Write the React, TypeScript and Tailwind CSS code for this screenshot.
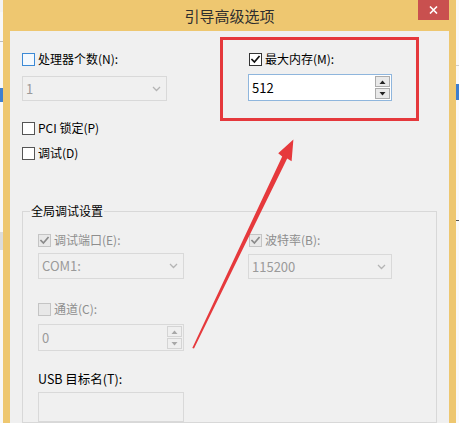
import React from "react";

type CbVariant = "normal" | "hover" | "checked" | "disabledChecked" | "disabled";

function Check({ color }: { color: string }) {
  return (
    <svg width="11" height="11" viewBox="0 0 11 11" className="block">
      <path d="M2 5.6 L4.4 8 L9 2.6" fill="none" stroke={color} strokeWidth="1.7" strokeLinecap="square" />
    </svg>
  );
}

function CheckBox({ variant, label }: { variant: CbVariant; label: string }) {
  const box =
    variant === "hover"
      ? "border-[#3c8ad6] bg-[#f4f9fe]"
      : variant === "checked"
      ? "border-[#333333] bg-white"
      : variant === "normal"
      ? "border-[#555555] bg-white"
      : "border-[#c4c4c4] bg-[#e8e8e8]";
  const text = variant === "disabled" || variant === "disabledChecked" ? "text-[#8e8e8e]" : "text-black";
  return (
    <div className="flex items-center h-[16px] gap-[3px]">
      <div className={`w-[13px] h-[13px] border flex items-center justify-center ${box}`}>
        {variant === "checked" && <Check color="#111111" />}
        {variant === "disabledChecked" && <Check color="#8a8a8a" />}
      </div>
      <span className={`text-[12px] leading-[16px] whitespace-nowrap ${text}`}>{label}</span>
    </div>
  );
}

function Chevron() {
  return (
    <svg width="9" height="6" viewBox="0 0 9 6" className="block">
      <path d="M1 1 L4.5 4.5 L8 1" fill="none" stroke="#b4b4b4" strokeWidth="1.3" />
    </svg>
  );
}

function DisabledSelect({ value, w, h }: { value: string; w: string; h: string }) {
  return (
    <div className={`${w} ${h} border border-[#d9d9d9] bg-[#f0f0f0] flex items-center justify-between pl-[3px] pr-[5px]`}>
      <span className="text-[13px] leading-[16px] text-[#9a9a9a]">{value}</span>
      <Chevron />
    </div>
  );
}

function Tri({ up, color }: { up: boolean; color: string }) {
  return (
    <svg width="7" height="4" viewBox="0 0 7 4" className="block">
      <path d={up ? "M0.5 4 L3.5 0.5 L6.5 4 Z" : "M0.5 0 L3.5 3.5 L6.5 0 Z"} fill={color} />
    </svg>
  );
}

function Spinner({ disabled }: { disabled?: boolean }) {
  const btn = disabled
    ? "border-[#d4d4d4] bg-[#efefef]"
    : "border-[#acacac] bg-[#e9e9e9]";
  const c = disabled ? "#a8a8a8" : "#222222";
  return (
    <div className="flex flex-col gap-[1px] py-[1px]">
      <div className={`w-[15px] h-[11px] border flex items-center justify-center ${btn}`}>
        <Tri up color={c} />
      </div>
      <div className={`w-[15px] h-[11px] border flex items-center justify-center ${btn}`}>
        <Tri up={false} color={c} />
      </div>
    </div>
  );
}

export default function App() {
  return (
    <div className="relative w-[459px] h-[423px] overflow-hidden flex bg-[#f6f6f6] font-['Noto_Sans_CJK_SC',sans-serif]">
      {/* background window sliver left */}
      <div className="w-[3px] shrink-0 flex flex-col bg-[#f8f8f8]">
        <div className="h-[12px] bg-[#f3f3f3]" />
        <div className="h-[30px] border-b border-[#bdbdbd]" />
        <div className="h-[46px]" />
        <div className="h-[14px] bg-[#3f7fd0]" />
        <div className="h-[130px]" />
        <div className="h-[18px] bg-[#dcdcdc]" />
      </div>

      {/* dialog window */}
      <div className="w-[453px] shrink-0 flex flex-col bg-[#eec770] px-[7px]">
        <div className="h-[31px] shrink-0 relative flex items-center justify-center">
          <span className="text-[15px] leading-[20px] text-[#2e2e2e]">引导高级选项</span>
          <div className="absolute right-0 top-0 w-[31px] h-[20px] bg-[#c9504f] flex items-center justify-center">
            <svg width="9" height="8" viewBox="0 0 9 8" className="block">
              <path d="M1 0.5 L8 7.5 M8 0.5 L1 7.5" stroke="#ffffff" strokeWidth="1.6" />
            </svg>
          </div>
        </div>

        <div className="flex-1 bg-[#f0f0f0] flex flex-col pl-[12px] pt-[20px]">
          <div className="grid grid-cols-[226px_1fr]">
            <div className="flex flex-col">
              <CheckBox variant="hover" label="处理器个数(N):" />
              <div className="mt-[9px]">
                <DisabledSelect value="1" w="w-[145px]" h="h-[25px]" />
              </div>
            </div>
            <div className="flex flex-col">
              <div className="pl-[1px]">
                <CheckBox variant="checked" label="最大内存(M):" />
              </div>
              <div className="mt-[7px] w-[144px] h-[27px] border border-[#8fb6dd] bg-white flex items-center justify-between pl-[3px] pr-[1px]">
                <span className="text-[13px] leading-[16px] text-black">512</span>
                <Spinner />
              </div>
            </div>
          </div>

          <div className="mt-[19px]">
            <CheckBox variant="normal" label="PCI 锁定(P)" />
          </div>
          <div className="mt-[9px]">
            <CheckBox variant="normal" label="调试(D)" />
          </div>

          <div className="mt-[50px] w-[415px] flex-1 border border-[#d8d8d8] relative pl-[15px] pt-[20px]">
            <span className="absolute -top-[9px] left-[7px] px-[1px] bg-[#f0f0f0] text-[12px] leading-[16px] text-black">
              全局调试设置
            </span>
            <div className="grid grid-cols-[210px_1fr]">
              <div className="flex flex-col">
                <CheckBox variant="disabledChecked" label="调试端口(E):" />
                <div className="mt-[5px]">
                  <DisabledSelect value="COM1:" w="w-[146px]" h="h-[26px]" />
                </div>
              </div>
              <div className="flex flex-col">
                <div className="pl-[1px]">
                  <CheckBox variant="disabledChecked" label="波特率(B):" />
                </div>
                <div className="mt-[6px]">
                  <DisabledSelect value="115200" w="w-[144px]" h="h-[25px]" />
                </div>
              </div>
            </div>

            <div className="mt-[22px]">
              <CheckBox variant="disabled" label="通道(C):" />
            </div>
            <div className="mt-[7px] w-[146px] h-[27px] border border-[#d9d9d9] bg-[#f0f0f0] flex items-center justify-between pl-[3px] pr-[1px]">
              <span className="text-[13px] leading-[16px] text-[#9a9a9a]">0</span>
              <Spinner disabled />
            </div>

            <div className="mt-[20px] h-[16px] flex items-center">
              <span className="text-[12.5px] leading-[16px] text-black">USB 目标名(T):</span>
            </div>
            <div className="mt-[5px] w-[146px] h-[30px] border border-[#d9d9d9] bg-[#f0f0f0]" />
          </div>
        </div>
      </div>

      {/* background window sliver right */}
      <div className="w-[3px] shrink-0 flex flex-col bg-[#fafafa]">
        <div className="h-[30px]" />
        <div className="h-[36px] border-b border-[#cfcfcf]" />
        <div className="h-[18px]" />
        <div className="h-[16px] bg-[#3d7ecf]" />
        <div className="h-[120px]" />
        <div className="h-[1px] bg-[#555555]" />
      </div>

      {/* annotation: red highlight box */}
      <div className="absolute left-[220px] top-[37px] w-[199px] h-[84px] border-[3px] border-[#e5383c] pointer-events-none" />

      {/* annotation: red arrow */}
      <svg className="absolute left-0 top-0 pointer-events-none" width="459" height="423" viewBox="0 0 459 423">
        <polygon
          points="192.3,348 282.2,156.6 278.2,153.3 293.4,139.4 291.6,161.2 287.2,158.6 194,348.6"
          fill="#e6393c"
        />
      </svg>
    </div>
  );
}
